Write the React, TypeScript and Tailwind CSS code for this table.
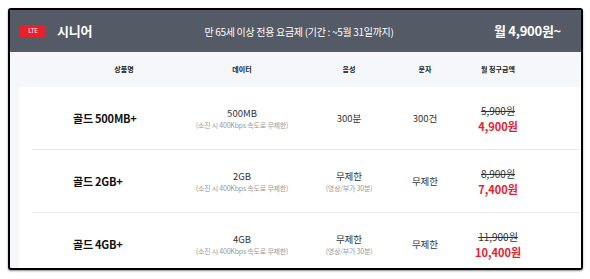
import React from "react";

interface Plan {
  name: string;
  data: string;
  voice: string;
  voiceNote?: string;
  sms: string;
  price: string;
  salePrice: string;
}

const plans: Plan[] = [
  { name: "골드 500MB+", data: "500MB", voice: "300분", sms: "300건", price: "5,900원", salePrice: "4,900원" },
  { name: "골드 2GB+", data: "2GB", voice: "무제한", voiceNote: "(영상/부가 30분)", sms: "무제한", price: "8,900원", salePrice: "7,400원" },
  { name: "골드 4GB+", data: "4GB", voice: "무제한", voiceNote: "(영상/부가 30분)", sms: "무제한", price: "11,900원", salePrice: "10,400원" },
];

const cols = "grid grid-cols-[148px_124px_90px_62px_84px_1fr]";

const App: React.FC = () => {
  return (
    <div
      className="w-[590px] h-[279px] bg-white pt-[8px] pl-[8px]"
      style={{ fontFamily: '"Noto Sans CJK KR", "Noto Sans", sans-serif' }}
    >
      <div className="w-[575px] h-[262px] border-2 border-black rounded-[3px] overflow-hidden bg-[#f5f7fb] shadow-[0_1px_2px_rgba(0,0,0,0.45)]">
        {/* title bar */}
        <div className="h-[42px] bg-[#545a66] flex items-center pl-[10px] pr-[20px] text-white">
          <span className="bg-[#e8202a] w-[26px] h-[12px] flex items-center justify-center text-[6px] leading-none">
            LTE
          </span>
          <span className="ml-[11px] text-[13px] font-bold tracking-[-0.02em]">시니어</span>
          <span className="flex-1 text-center text-[10px] tracking-[-0.03em] pl-[12px]">
            만 65세 이상 전용 요금제 (기간 : ~5월 31일까지)
          </span>
          <span className="text-[13px] font-bold tracking-[-0.02em]">월 4,900원~</span>
        </div>

        {/* column labels */}
        <div className={`${cols} h-[35px] items-center pl-[22px] text-[7px] font-bold text-[#222]`}>
          <div className="text-center pl-[36px]">상품명</div>
          <div className="text-center">데이터</div>
          <div className="text-center">음성</div>
          <div className="text-center">문자</div>
          <div className="text-center">월 청구금액</div>
        </div>

        {/* rows */}
        <div className="ml-[9px] bg-white h-full">
          {plans.map((p) => (
            <div
              key={p.name}
              className={`${cols} ml-[13px] h-[63px] items-center border-b border-[#e6e8ee] text-[#333]`}
            >
              <div className="pl-[41px] text-[11px] font-bold text-[#111] tracking-[-0.02em]">{p.name}</div>
              <div className="flex flex-col items-center">
                <span className="text-[9.5px] leading-[14px]">{p.data}</span>
                <span className="text-[7px] leading-[11px] text-[#999] tracking-[-0.03em]">
                  (소진 시 400Kbps 속도로 무제한)
                </span>
              </div>
              <div className="flex flex-col items-center">
                <span className="text-[9.5px] leading-[14px]">{p.voice}</span>
                {p.voiceNote && (
                  <span className="text-[7px] leading-[11px] text-[#999] tracking-[-0.03em]">{p.voiceNote}</span>
                )}
              </div>
              <div className="text-center text-[9.5px]">{p.sms}</div>
              <div className="flex flex-col items-center">
                <span className="text-[10px] leading-[15px] line-through text-[#333]">{p.price}</span>
                <span className="text-[11px] leading-[16px] font-bold text-[#e8202a]">{p.salePrice}</span>
              </div>
              <div />
            </div>
          ))}
        </div>
      </div>
    </div>
  );
};

export default App;
